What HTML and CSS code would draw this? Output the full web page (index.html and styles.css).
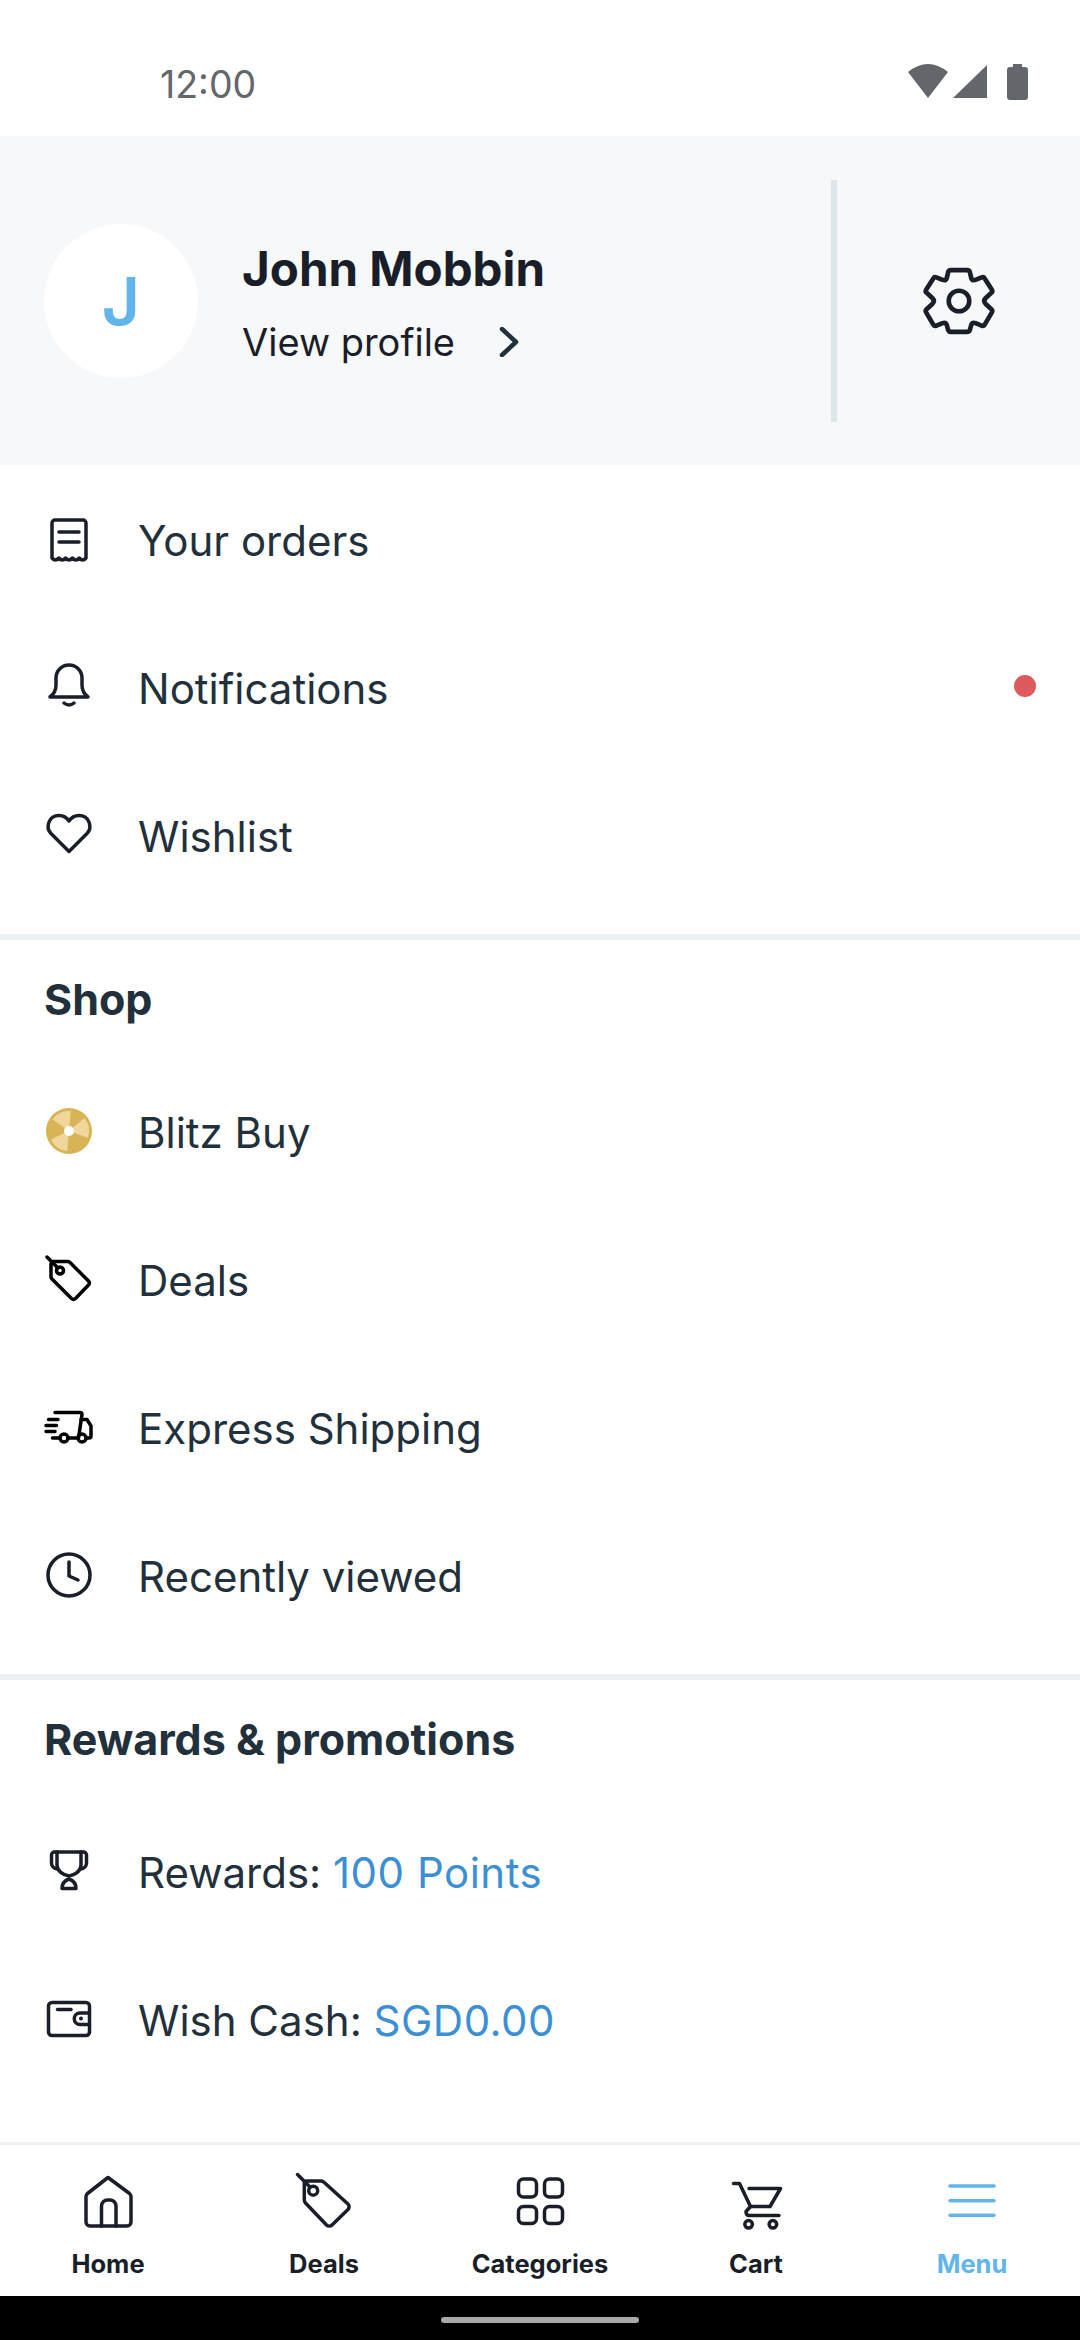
FILE: index.html
```html
<!DOCTYPE html>
<html lang="en">
<head>
  <meta charset="UTF-8" />
  <meta name="viewport" content="width=device-width, initial-scale=1.0" />
  <title>Menu</title>
  <link rel="stylesheet" href="styles.css">
</head>
<body>
  <div class="phone">
    <div class="status-bar">
      <span class="status-time">12:00</span>
      <svg class="status-icons" viewBox="905 60 125 45">
        <path d="M908 73Q928 57 948 73L928 99Z"/>
        <path d="M953 99L987 66V99Z"/>
        <path d="M1013 65h9v3h3a3 3 0 0 1 3 3v27a3 3 0 0 1-3 3h-15a3 3 0 0 1-3-3V71a3 3 0 0 1 3-3h3Z"/>
      </svg>
    </div>

    <div class="profile">
      <div class="profile-main">
        <div class="avatar">J</div>
        <div class="profile-text">
          <div class="profile-name">John Mobbin</div>
          <div class="profile-link">
            View profile
            <svg class="chevron" viewBox="0 0 20 30"><path d="M3 2L17 15L3 28"/></svg>
          </div>
        </div>
      </div>
      <div class="profile-divider"></div>
      <div class="profile-settings">
        <svg class="gear" viewBox="0 0 72 72">
          <path d="M28 6H44Q46 6 46.6 8L48 14Q49 16.5 52 15.5L58 13Q60 12.3 61 14L68 25Q69 27 67.5 28L62 33Q59 36 62 39L67.5 44Q69 45.5 68 47L61 59Q60 60.500 58 60L52 57.500Q49 56.500 48 59L46.600 64Q46 66 44 66H28Q26 66 25.400 64L24 59Q23 56.500 20 57.500L14 60Q12 60.500 11 59L4 47Q3 45.500 4.500 44L10 39Q13 36 10 33L4.500 28Q3 27 4 25L11 14Q12 12.300 14 13L20 15.500Q23 16.500 24 14L25.400 8Q26 6 28 6Z"/>
          <circle cx="36" cy="36" r="10"/>
        </svg>
      </div>
    </div>

    <div class="menu-group">
      <div class="menu-row">
        <svg class="menu-icon" viewBox="0 0 60 60">
          <path d="M13 49V14a3 3 0 0 1 3-3h28a3 3 0 0 1 3 3v35q-3.400 4-6.800 0q-3.400 4-6.800 0q-3.400 4-6.800 0q-3.400 4-6.800 0q-3.400 4-6.800 0Z"/>
          <path d="M20 23H40M20 33H40"/>
        </svg>
        <span class="menu-label">Your orders</span>
      </div>
      <div class="menu-row">
        <svg class="menu-icon" viewBox="0 0 60 60">
          <path d="M11 40c4-3 6-6 6-12v-7a13 13 0 0 1 26 0v7c0 6 2 9 6 12Z"/>
          <path d="M25 46q5 4 10 0"/>
        </svg>
        <span class="menu-label">Notifications</span>
        <span class="red-dot"></span>
      </div>
      <div class="menu-row">
        <svg class="menu-icon" viewBox="0 0 60 60">
          <path d="M30 46.500L12 28.500C6 22 10 10.500 20 10.500C25 10.500 28 13 30 16C32 13 35 10.500 40 10.500C50 10.500 54 22 48 28.500Z"/>
        </svg>
        <span class="menu-label">Wishlist</span>
      </div>
    </div>

    <div class="menu-group">
      <h2 class="group-title">Shop</h2>
      <div class="menu-row">
        <svg class="menu-icon blitz" viewBox="0 0 60 60">
          <circle class="blitz-base" cx="30" cy="30" r="23"/>
          <path class="blitz-light" d="M30 30L13.600 18.500A20 20 0 0 1 31.700 10.100Z"/>
          <path class="blitz-light" d="M30 30L45.300 17.100A20 20 0 0 1 48.800 36.800Z"/>
          <path class="blitz-light" d="M30 30L28.300 49.900A20 20 0 0 1 11.900 38.500Z"/>
          <circle class="blitz-hole" cx="30" cy="30" r="5"/>
        </svg>
        <span class="menu-label">Blitz Buy</span>
      </div>
      <div class="menu-row">
        <svg class="menu-icon dark" viewBox="0 0 60 60">
          <path d="M14.500 12.500H29a3 3 0 0 1 2 1L49.500 32a3 3 0 0 1 0 4L36.500 49.500a3 3 0 0 1-4 0L13 30a3 3 0 0 1-1-2V15a2.500 2.500 0 0 1 2.500-2.500Z"/>
          <circle cx="21" cy="21.500" r="3.500"/>
          <path d="M8 8L19 19"/>
        </svg>
        <span class="menu-label">Deals</span>
      </div>
      <div class="menu-row">
        <svg class="menu-icon dark" viewBox="0 0 60 60">
          <path d="M16 15.500H41a2 2 0 0 1 2 2L39.500 41"/>
          <path d="M42 22.500H48L52 29V39a2 2 0 0 1-2 2H48"/>
          <path d="M29.500 41H38.500"/>
          <circle cx="25" cy="41" r="4"/>
          <circle cx="43" cy="41" r="4"/>
          <path d="M9.500 22.500H19M7 28.500H17.500M7 34.500H16M13.500 41H20.500"/>
        </svg>
        <span class="menu-label">Express Shipping</span>
      </div>
      <div class="menu-row">
        <svg class="menu-icon" viewBox="0 0 60 60">
          <circle cx="30" cy="30" r="21"/>
          <path d="M30 17V31L39 35"/>
        </svg>
        <span class="menu-label">Recently viewed</span>
      </div>
    </div>

    <div class="menu-group last">
      <h2 class="group-title">Rewards &amp; promotions</h2>
      <div class="menu-row">
        <svg class="menu-icon" viewBox="0 0 60 60">
          <path d="M18 11H42V24C42 30 36 34 30 35C24 34 18 30 18 24Z"/>
          <path d="M18 11H15.500a3 3 0 0 0-3 3V22C12.500 25 15 27.500 18.500 28M42 11H44.500a3 3 0 0 1 3 3V22C47.500 25 45 27.500 41.500 28"/>
          <path d="M23 47.500H37C37 43 34 39.500 30 38C26 39.500 23 43 23 47.500Z"/>
        </svg>
        <span class="menu-label">Rewards: <span class="value">100 Points</span></span>
      </div>
      <div class="menu-row">
        <svg class="menu-icon" viewBox="0 0 60 60">
          <rect x="9.500" y="13.500" width="41" height="33" rx="3.500"/>
          <path d="M18.500 20.500H32"/>
          <path d="M50.500 24H41a5.500 5.500 0 0 0 0 11.500H50.500"/>
          <circle class="wallet-dot" cx="42" cy="29.500" r="2"/>
        </svg>
        <span class="menu-label">Wish Cash: <span class="value">SGD0.00</span></span>
      </div>
    </div>

    <nav class="bottom-nav">
      <div class="nav-item">
        <svg class="nav-icon" viewBox="0 0 60 60">
          <path d="M30 5.500L9.500 21.500a4 4 0 0 0-1.500 3V50a4 4 0 0 0 4 4H49a4 4 0 0 0 4-4V24.500a4 4 0 0 0-1.500-3Z"/>
          <path d="M23.500 54V34a6 6 0 0 1 6-6H32a6 6 0 0 1 6 6V54"/>
        </svg>
        <span>Home</span>
      </div>
      <div class="nav-item">
        <svg class="nav-icon" viewBox="0 0 60 60">
          <path d="M12.500 9H27a4 4 0 0 1 3 1.200L54 32a4 4 0 0 1 0 5.500L38 53a4 4 0 0 1-5.500 0L11.500 31a4 4 0 0 1-1.200-3V11a2.200 2.200 0 0 1 2.200-2Z"/>
          <circle cx="19.200" cy="18.700" r="4.500"/>
          <path d="M3.500 2.500L15 14"/>
        </svg>
        <span>Deals</span>
      </div>
      <div class="nav-item">
        <svg class="nav-icon" viewBox="0 0 60 60">
          <rect x="8.500" y="7" width="18" height="18" rx="5"/>
          <rect x="34.500" y="7" width="18" height="18" rx="5"/>
          <rect x="8.500" y="34.500" width="18" height="17" rx="5"/>
          <rect x="34.500" y="34.500" width="18" height="17" rx="5"/>
        </svg>
        <span>Categories</span>
      </div>
      <div class="nav-item">
        <svg class="nav-icon" viewBox="0 0 60 60">
          <path d="M7.500 11.500H13.500L24.500 34.500H44L54.500 16.500H23"/>
          <path d="M24.500 34.500L20 39.500Q20 43.500 23 43.500H53"/>
          <circle cx="22.600" cy="52.300" r="3.800"/>
          <circle cx="46.900" cy="52.300" r="3.800"/>
        </svg>
        <span>Cart</span>
      </div>
      <div class="nav-item active">
        <svg class="nav-icon" viewBox="0 0 60 60">
          <path d="M8 14H52M8 28.700H52M8 43.300H52"/>
        </svg>
        <span>Menu</span>
      </div>
    </nav>

    <div class="gesture-bar">
      <div class="gesture-pill"></div>
    </div>
  </div>
</body>
</html>
```

FILE: styles.css
```css
:root {
  --text-dark: #191e28;
  --text-menu: #22303c;
  --accent-blue: #62b5ea;
  --link-blue: #3d8fd4;
  --bg-light: #f7f8fa;
  --line: #eef1f4;
}

* {
  box-sizing: border-box;
  margin: 0;
  padding: 0;
}

body {
  font-family: "Inter", "Liberation Sans", sans-serif;
  color: var(--text-menu);
  background: #ffffff;
}

.phone {
  width: 1080px;
  height: 2340px;
  display: flex;
  flex-direction: column;
  overflow: hidden;
}

/* status bar */
.status-bar {
  height: 136px;
  padding: 32px 50px 0 160px;
  display: flex;
  align-items: center;
  justify-content: space-between;
  flex-shrink: 0;
}

.status-time {
  font-size: 37.500px;
  color: #63676b;
}

.status-icons {
  width: 125px;
  height: 45px;
  fill: #63676b;
  margin-top: -5px;
}

/* profile header */
.profile {
  height: 329px;
  background: var(--bg-light);
  display: flex;
  align-items: center;
  flex-shrink: 0;
}

.profile-main {
  width: 831px;
  padding-left: 44px;
  display: flex;
  align-items: center;
  gap: 44px;
}

.avatar {
  width: 154px;
  height: 154px;
  border-radius: 50%;
  background: #ffffff;
  color: var(--accent-blue);
  font-size: 66px;
  font-weight: 600;
  display: flex;
  align-items: center;
  justify-content: center;
}

.profile-text {
  padding-top: 4px;
}

.profile-name {
  font-size: 47.500px;
  font-weight: 700;
  color: var(--text-dark);
  line-height: 60px;
  margin-bottom: 18px;
}

.profile-link {
  font-size: 38px;
  color: var(--text-dark);
  line-height: 50px;
  display: flex;
  align-items: center;
  gap: 44px;
}

.chevron {
  width: 20px;
  height: 30px;
  fill: none;
  stroke: var(--text-menu);
  stroke-width: 4.500;
  stroke-linecap: round;
  stroke-linejoin: round;
}

.profile-divider {
  width: 6px;
  height: 242px;
  background: #dfe6ea;
}

.profile-settings {
  flex: 1;
  display: flex;
  justify-content: center;
}

.gear {
  width: 74px;
  height: 74px;
  fill: none;
  stroke: var(--text-dark);
  stroke-width: 4.500;
  stroke-linejoin: round;
}

/* menu lists */
.menu-group {
  border-bottom: 6px solid var(--line);
  padding-bottom: 25px;
}

.menu-group.last {
  border-bottom: none;
  flex: 1;
}

.group-title {
  font-size: 43px;
  font-weight: 700;
  color: var(--text-menu);
  padding: 0 44px;
  height: 117px;
  display: flex;
  align-items: center;
}

.menu-row {
  height: 148px;
  padding: 0 44px 0 39px;
  display: flex;
  align-items: center;
  gap: 39px;
  font-size: 42px;
}

.menu-label {
  padding-top: 3px;
}

.menu-icon {
  width: 60px;
  height: 60px;
  flex-shrink: 0;
  fill: none;
  stroke: var(--text-dark);
  stroke-width: 3.500;
  stroke-linecap: round;
  stroke-linejoin: round;
}

.menu-icon.dark {
  stroke: #000000;
}

.menu-icon.blitz {
  stroke: none;
}

.blitz-base { fill: #d8b457; }
.blitz-light { fill: #f0d69a; }
.blitz-hole { fill: #ffffff; }

.wallet-dot {
  fill: var(--text-dark);
  stroke: none;
}

.value {
  color: var(--link-blue);
  letter-spacing: 0.5px;
}

.red-dot {
  width: 22px;
  height: 22px;
  border-radius: 50%;
  background: #de5a5f;
  margin-left: auto;
  margin-top: -2px;
}

/* bottom nav */
.bottom-nav {
  height: 154px;
  border-top: 3px solid var(--line);
  display: flex;
  flex-shrink: 0;
  background: #ffffff;
}

.nav-item {
  flex: 1;
  display: flex;
  flex-direction: column;
  align-items: center;
  padding-top: 27px;
  font-size: 25.500px;
  font-weight: 700;
  color: var(--text-dark);
}

.nav-item span {
  margin-top: 16px;
}

.nav-icon {
  width: 60px;
  height: 60px;
  fill: none;
  stroke: var(--text-dark);
  stroke-width: 3.500;
  stroke-linecap: round;
  stroke-linejoin: round;
}

.nav-item.active {
  color: var(--accent-blue);
}

.nav-item.active .nav-icon {
  stroke: var(--accent-blue);
}

/* android gesture area */
.gesture-bar {
  height: 44px;
  background: #000000;
  display: flex;
  justify-content: center;
  padding-top: 21px;
  flex-shrink: 0;
}

.gesture-pill {
  width: 198px;
  height: 6px;
  border-radius: 3px;
  background: #aaaaaa;
}
```
